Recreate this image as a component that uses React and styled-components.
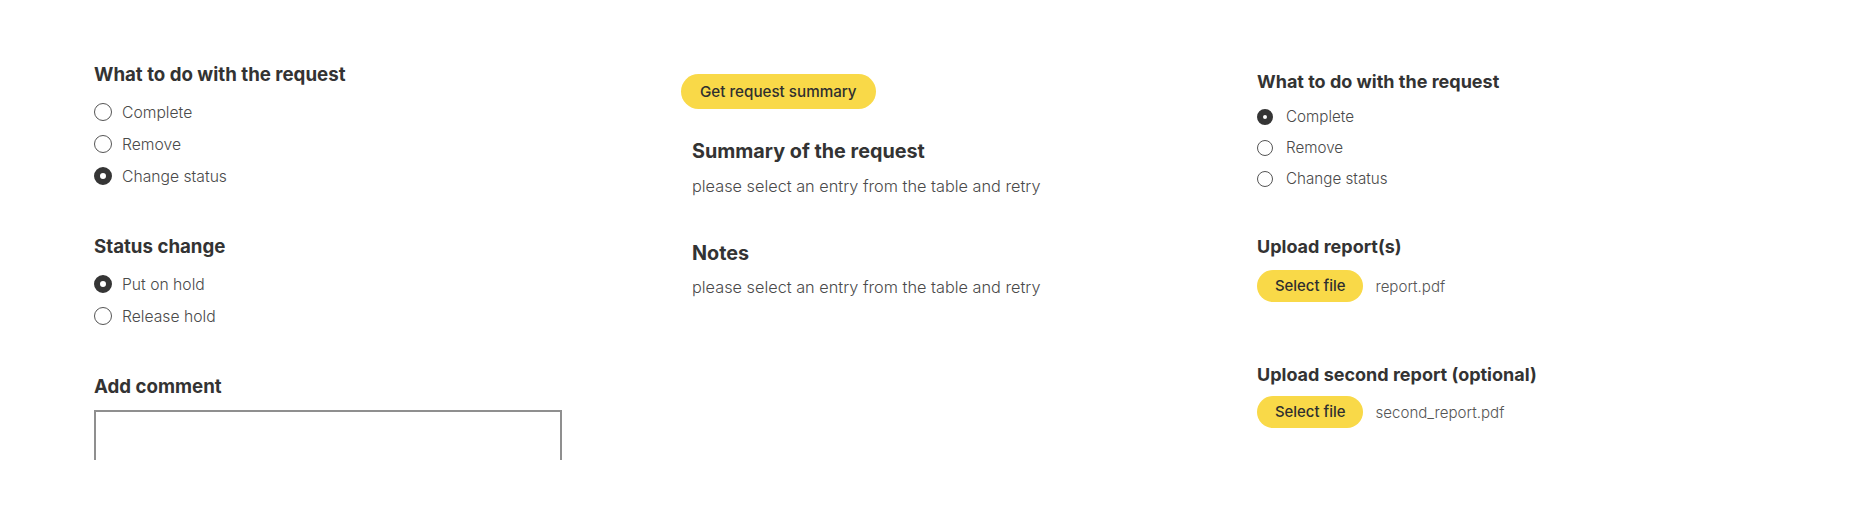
import styled, { createGlobalStyle } from 'styled-components'

const GlobalStyle = createGlobalStyle`
  body {
    margin: 0;
    background: #ffffff;
    font-family: Inter, "Noto Sans", sans-serif;
    color: #333333;
  }
`

const colors = {
  yellow: '#f9d948',
  heading: '#333333',
  label: '#4a4a4a',
}

const Page = styled.div`
  height: 460px;
  overflow: hidden;
  display: grid;
  grid-template-columns: 587px 576px 1fr;
  padding-left: 94px;
`
const Column = styled.div`
  display: flex;
  flex-direction: column;
  align-items: flex-start;
  padding-top: ${({ $top }) => $top}px;
`
const Heading = styled.h3`
  margin: ${({ $gap }) => $gap || 0}px 0 0 0;
  font-size: ${({ $size }) => $size}px;
  line-height: ${({ $lh }) => $lh}px;
  font-weight: 700;
  color: ${colors.heading};
  padding-left: ${({ $indent }) => $indent || 0}px;
  white-space: nowrap;
`
const RadioGroup = styled.div`
  display: flex;
  flex-direction: column;
  margin-top: ${({ $gap }) => $gap}px;
`
const RadioRow = styled.label`
  display: flex;
  align-items: center;
  gap: ${({ $space }) => $space}px;
  height: ${({ $h }) => $h}px;
  font-size: ${({ $font }) => $font}px;
  font-weight: 300;
  color: ${colors.label};
`
const RadioInput = styled.input.attrs({ type: 'radio' })`
  appearance: none;
  margin: 0;
  width: ${({ $size }) => $size}px;
  height: ${({ $size }) => $size}px;
  border-radius: 50%;
  border: 1.5px solid #555555;
  background: #ffffff;
  box-sizing: border-box;
  &:checked {
    border: ${({ $size }) => Math.round($size * 0.36)}px solid #353535;
  }
`
const Comment = styled.textarea`
  margin-top: 12px;
  width: 468px;
  height: 120px;
  border: 2px solid #8f8f8f;
  resize: none;
  box-sizing: border-box;
`
const PillButton = styled.button`
  border: none;
  border-radius: 999px;
  background: ${colors.yellow};
  color: #2f2f2f;
  font-family: Inter, sans-serif;
  font-size: ${({ $font }) => $font}px;
  font-weight: 500;
  height: ${({ $h }) => $h}px;
  padding: 0 ${({ $pad }) => $pad}px;
  margin-top: ${({ $gap }) => $gap || 0}px;
  white-space: nowrap;
`
const Info = styled.p`
  margin: ${({ $gap }) => $gap}px 0 0 0;
  padding-left: 11px;
  font-size: 16.3px;
  line-height: 20px;
  font-weight: 300;
  color: ${colors.label};
  white-space: nowrap;
`
const UploadRow = styled.div`
  display: flex;
  align-items: center;
  gap: 12px;
  margin-top: ${({ $gap }) => $gap}px;
`
const FileName = styled.span`
  font-size: 15.1px;
  font-weight: 300;
  color: #555555;
`

function Radio({ label, checked, name, h, size, font, space }) {
  return (
    <RadioRow $h={h} $font={font} $space={space}>
      <RadioInput name={name} defaultChecked={checked} $size={size} />
      {label}
    </RadioRow>
  )
}

function Upload({ file, gap }) {
  return (
    <UploadRow $gap={gap}>
      <PillButton $h={32} $pad={18} $font={14.9}>
        Select file
      </PillButton>
      <FileName>{file}</FileName>
    </UploadRow>
  )
}

const left = { h: 32, size: 18, font: 15.7, space: 10 }
const right = { h: 31, size: 16, font: 15.2, space: 13 }

export default function App() {
  return (
    <>
      <GlobalStyle />
      <Page>
        <Column $top={64}>
          <Heading $size={18.7} $lh={22}>What to do with the request</Heading>
          <RadioGroup $gap={10}>
            <Radio name="left-action" label="Complete" {...left} />
            <Radio name="left-action" label="Remove" {...left} />
            <Radio name="left-action" label="Change status" {...left} checked />
          </RadioGroup>
          <Heading $size={18.7} $lh={22} $gap={44}>Status change</Heading>
          <RadioGroup $gap={10}>
            <Radio name="hold" label="Put on hold" {...left} checked />
            <Radio name="hold" label="Release hold" {...left} />
          </RadioGroup>
          <Heading $size={18.7} $lh={22} $gap={44}>Add comment</Heading>
          <Comment />
        </Column>

        <Column $top={74}>
          <PillButton $h={35} $pad={19} $font={15.2}>
            Get request summary
          </PillButton>
          <Heading $size={19.8} $lh={24} $gap={30} $indent={11}>
            Summary of the request
          </Heading>
          <Info $gap={13}>please select an entry from the table and retry</Info>
          <Heading $size={19.8} $lh={24} $gap={45} $indent={11}>
            Notes
          </Heading>
          <Info $gap={12}>please select an entry from the table and retry</Info>
        </Column>

        <Column $top={72}>
          <Heading $size={18} $lh={20}>What to do with the request</Heading>
          <RadioGroup $gap={9}>
            <Radio name="right-action" label="Complete" {...right} checked />
            <Radio name="right-action" label="Remove" {...right} />
            <Radio name="right-action" label="Change status" {...right} />
          </RadioGroup>
          <Heading $size={18} $lh={20} $gap={43}>
            Upload report(s)
          </Heading>
          <Upload file="report.pdf" gap={13} />
          <Heading $size={18} $lh={20} $gap={63}>
            Upload second report (optional)
          </Heading>
          <Upload file="second_report.pdf" gap={11} />
        </Column>
      </Page>
    </>
  )
}
